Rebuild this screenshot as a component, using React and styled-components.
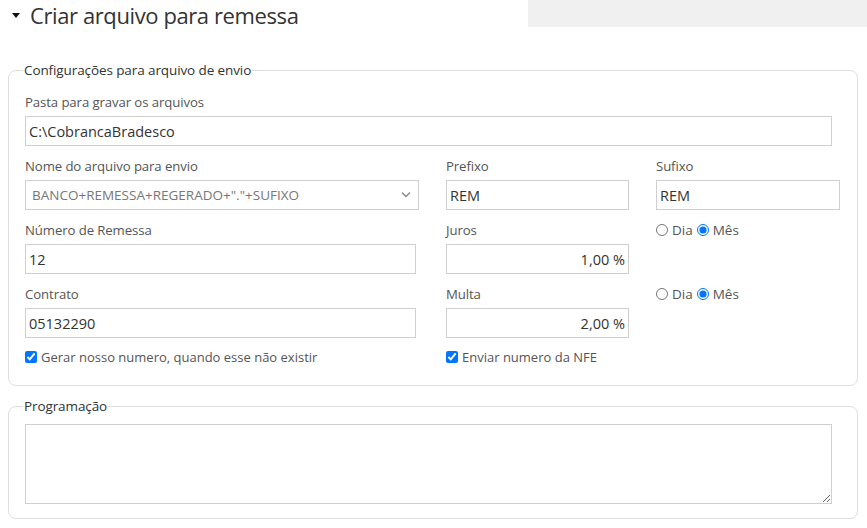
import React from "react";
import styled, { createGlobalStyle } from "styled-components";

const GlobalStyle = createGlobalStyle`
  html, body {
    margin: 0;
    padding: 0;
    background: #fff;
  }
  body {
    font-family: "Open Sans", "Noto Sans", "DejaVu Sans", sans-serif;
    color: #333;
  }
`;

const Page = styled.div`
  width: 867px;
  height: 528px;
  overflow: hidden;
`;

const Header = styled.div`
  display: flex;
  align-items: flex-start;
  justify-content: space-between;
  height: 30px;
  margin-bottom: 31px;
`;

const TitleWrap = styled.div`
  display: flex;
  align-items: center;
  height: 30px;
  padding-left: 12px;
  gap: 10px;
`;

const Caret = styled.span`
  width: 0;
  height: 0;
  border-left: 4px solid transparent;
  border-right: 4px solid transparent;
  border-top: 5px solid #111;
  margin-top: 1px;
`;

const Title = styled.h2`
  margin: 0;
  font-family: "Open Sans", sans-serif;
  font-weight: 400;
  font-size: 22px;
  letter-spacing: -0.4px;
  line-height: 30px;
  color: #333;
`;

const GrayBar = styled.div`
  width: 339px;
  height: 27px;
  background: #f0f0f0;
`;

const Fieldset = styled.fieldset`
  margin: 0 9px ${(p) => p.$after}px 8px;
  padding: ${(p) => p.$top}px 16px ${(p) => p.$bottom}px 16px;
  border: 1px solid #dedede;
  border-radius: 8px;
  min-width: 0;
`;

const Legend = styled.legend`
  padding: 0 1px;
  margin-left: -2px;
  font-size: 13.5px;
  font-weight: 500;
  letter-spacing: -0.1px;
  color: #333;
  line-height: 18px;
`;

const Grid = styled.div`
  display: grid;
  grid-template-columns: 393px 182px 183px;
  column-gap: 28px;
  row-gap: 10px;
`;

const Field = styled.div`
  display: flex;
  flex-direction: column;
  gap: 4px;
  grid-column: ${(p) => p.$span || "auto"};
`;

const Label = styled.label`
  font-size: 13.2px;
  line-height: 20px;
  color: #555;
  letter-spacing: -0.1px;
`;

const Input = styled.input`
  box-sizing: border-box;
  width: ${(p) => p.$w}px;
  height: 30px;
  border: 1px solid #cfcfcf;
  border-radius: 0;
  padding: 0 3px;
  font-family: "Open Sans", sans-serif;
  font-size: 14.5px;
  color: #333;
  text-align: ${(p) => (p.$right ? "right" : "left")};
  outline: none;
  background: #fff;
`;

const SelectWrap = styled.div`
  position: relative;
  width: 394px;
`;

const Select = styled.select`
  box-sizing: border-box;
  width: 100%;
  height: 30px;
  border: 1px solid #cfcfcf;
  border-radius: 0;
  padding: 0 6px;
  appearance: none;
  background: #fff;
  font-family: "Open Sans", sans-serif;
  font-size: 13.5px;
  color: #777;
  outline: none;
`;

const Chevron = styled.svg`
  position: absolute;
  right: 8px;
  top: 11px;
  pointer-events: none;
`;

const Options = styled.div`
  display: flex;
  align-items: center;
  height: 20px;
  font-size: 13.5px;
  color: #555;
`;

const Opt = styled.label`
  display: flex;
  align-items: center;
  gap: 4px;
  margin-right: 4px;

  input {
    margin: 0;
    width: 12px;
    height: 12px;
  }
`;

const Check = styled.label`
  display: flex;
  align-items: center;
  gap: 4px;
  height: 20px;
  font-size: 13px;
  color: #555;

  input {
    margin: 0;
    width: 12px;
    height: 12px;
  }
`;

const CheckRow = styled.div`
  grid-column: ${(p) => p.$col};
  margin-top: -1px;
`;

const TextArea = styled.textarea`
  display: block;
  box-sizing: border-box;
  width: 807px;
  height: 80px;
  margin: 0;
  border: 1px solid #cfcfcf;
  border-radius: 0;
  resize: both;
  outline: none;
`;

const Period = ({ name }) => (
  <Options>
    <Opt>
      <input type="radio" name={name} /> Dia
    </Opt>
    <Opt>
      <input type="radio" name={name} defaultChecked /> Mês
    </Opt>
  </Options>
);

export default function App() {
  return (
    <Page>
      <GlobalStyle />
      <Header>
        <TitleWrap>
          <Caret />
          <Title>Criar arquivo para remessa</Title>
        </TitleWrap>
        <GrayBar />
      </Header>

      <Fieldset $top={13} $bottom={18} $after={11}>
        <Legend>Configurações para arquivo de envio</Legend>
        <Grid>
          <Field $span="1 / 4">
            <Label>Pasta para gravar os arquivos</Label>
            <Input $w={807} defaultValue="C:\CobrancaBradesco" />
          </Field>

          <Field>
            <Label>Nome do arquivo para envio</Label>
            <SelectWrap>
              <Select defaultValue="a">
                <option value="a">BANCO+REMESSA+REGERADO+"."+SUFIXO</option>
              </Select>
              <Chevron width="10" height="7" viewBox="0 0 10 7">
                <path d="M1 1.5 L5 5.5 L9 1.5" fill="none" stroke="#888" strokeWidth="1.4" />
              </Chevron>
            </SelectWrap>
          </Field>
          <Field>
            <Label>Prefixo</Label>
            <Input $w={183} defaultValue="REM" />
          </Field>
          <Field>
            <Label>Sufixo</Label>
            <Input $w={184} defaultValue="REM" />
          </Field>

          <Field>
            <Label>Número de Remessa</Label>
            <Input $w={391} defaultValue="12" />
          </Field>
          <Field>
            <Label>Juros</Label>
            <Input $w={183} $right defaultValue="1,00 %" />
          </Field>
          <Field>
            <Period name="juros" />
          </Field>

          <Field>
            <Label>Contrato</Label>
            <Input $w={391} defaultValue="05132290" />
          </Field>
          <Field>
            <Label>Multa</Label>
            <Input $w={183} $right defaultValue="2,00 %" />
          </Field>
          <Field>
            <Period name="multa" />
          </Field>

          <CheckRow $col="1">
            <Check>
              <input type="checkbox" defaultChecked /> Gerar nosso numero, quando esse não existir
            </Check>
          </CheckRow>
          <CheckRow $col="2 / 4">
            <Check>
              <input type="checkbox" defaultChecked /> Enviar numero da NFE
            </Check>
          </CheckRow>
        </Grid>
      </Fieldset>

      <Fieldset $top={9} $bottom={14} $after={0}>
        <Legend>Programação</Legend>
        <TextArea />
      </Fieldset>
    </Page>
  );
}
